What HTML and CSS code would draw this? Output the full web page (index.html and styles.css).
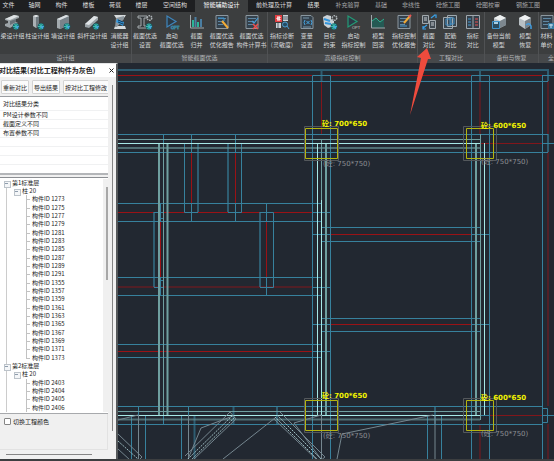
FILE: index.html
```html
<!DOCTYPE html>
<html lang="zh-CN">
<head>
<meta charset="utf-8">
<title>智能辅助设计</title>
<link rel="stylesheet" href="styles.css">
</head>
<body>
<svg class="defs" aria-hidden="true">
  <defs>
    <g id="globe"><circle cx="12" cy="12.500" r="3.300" fill="#17636b"/><path d="M9 12.500h6M12 9.500v6M10 10.500q2 2 4 0M10 14.500q2-2 4 0" stroke="#3fc5b5" stroke-width=".9" fill="none"/><path d="M11.500 13l3-1.500-.5 3.500z" fill="#4aa3e8"/></g>
    <g id="doc"><path d="M2 1.500h12v13H2z" fill="#34414c" stroke="#8c979f"/><path d="M4 4.500h8M4 7.500h6M4 10.500h5" stroke="#5f87a3" fill="none"/></g>
    <g id="play"><path d="M3 2v11l9-5.500z" fill="#2b3a46" stroke="currentColor" stroke-width="1.200"/></g>
  </defs>
</svg>

<nav class="tabs">
  <a href="#">文件</a><a href="#">轴网</a><a href="#">构件</a><a href="#">楼板</a><a href="#">荷载</a><a href="#">楼层</a><a href="#">空间结构</a><a href="#" class="active">智能辅助设计</a><a href="#">前处理及计算</a><a href="#">结果</a><a href="#" class="dim">补充验算</a><a href="#" class="dim">基础</a><a href="#" class="dim">非线性</a><a href="#" class="dim">砼施工图</a><a href="#" class="dim">砼图校审</a><a href="#" class="dim">钢施工图</a>
</nav>

<header class="ribbon">
  <section class="group">
    <div class="tools design">
      <button><svg viewBox="0 0 16 16"><path d="M1 5l9-4 5 1v2l-3 1v3l2 1-8 5-5-2v-2l3-1V7L1 6z" fill="#9da4a8"/><path d="M1 5l9-4 5 1-9 4z" fill="#dfe3e5"/><path d="M6 7l6-2v3l-6 3z" fill="#697278"/><use href="#globe"/></svg><span>梁设计组</span></button>
      <button><svg viewBox="0 0 16 16"><path d="M4 2l3-1 3 1v10l-3 2-3-2z" fill="#aab0b4"/><path d="M7 3l3-1v10l-3 2z" fill="#70797f"/><path d="M4 2l3-1 3 1-3 1z" fill="#e6eaec"/><use href="#globe"/></svg><span>柱设计组</span></button>
      <button><svg viewBox="0 0 16 16"><path d="M2 5l9-4 3 1v9l-9 4-3-1z" fill="#a3aaae"/><path d="M5 6l9-4v9l-9 4z" fill="#79838a"/><path d="M2 5l9-4 3 1-9 4z" fill="#dce1e4"/><use href="#globe"/></svg><span>墙设计组</span></button>
      <button><svg viewBox="0 0 16 16"><path d="M1 10l9-8 4 1v3l-9 8-4-1z" fill="#9ba3a8"/><path d="M1 10l9-8 4 1-9 8z" fill="#dfe3e6"/><use href="#globe"/></svg><span>斜杆设计组</span></button>
      <button><svg viewBox="0 0 16 16"><path d="M2 1h12l-2 3H4zM3 12h10l1 3H2z" fill="#d6dadc"/><path d="M4 4l8-2v3L5 13H3z" fill="#8b959c"/><path d="M5 5l7 3-1 4-7-4z" fill="#3597da"/><path d="M6 8l5 2M6 6l5 2" stroke="#173b57"/></svg><span>消能器<br>设计组</span></button>
    </div>
    <h2>设计组</h2>
  </section>
  <section class="group">
    <div class="tools section">
      <button><svg viewBox="0 0 16 16"><path d="M1 2h9v2H7v8h3v2H1v-2h3V4H1z" fill="#34393d" stroke="#a5abae"/><circle cx="12.500" cy="4" r="2.300" fill="none" stroke="#aeb4b8" stroke-width="1.500" stroke-dasharray="1.500 .7"/><use href="#globe"/></svg><span>截面优选<br>设置</span></button>
      <button><svg viewBox="0 0 16 16" class="blue"><use href="#play"/><text x="7" y="15">OPT</text></svg><span>启动<br>截面优选</span></button>
      <button><svg viewBox="0 0 16 16"><path d="M1.500 1v13H15" fill="none" stroke="#9fa7ac"/><path d="M4 6v7M9 8v5" stroke="#2bb497" stroke-width="2"/><path d="M6.500 3v10M12 5v8" stroke="#4a7ea2" stroke-width="2"/></svg><span>截面<br>归并</span></button>
      <button><svg viewBox="0 0 16 16"><use href="#doc"/><path d="M4 4h6v3H8l4 5" fill="none" stroke="#3993d0"/><path d="M8 7l6 7" stroke="#f0aa37" stroke-width="2"/></svg><span>截面优选<br>优化报告</span></button>
      <button><svg viewBox="0 0 16 16"><use href="#doc"/><path d="M8 7l2 2 4-5" fill="none" stroke="#459cd5" stroke-width="1.200"/><path d="M9 10l5 5M14 10l-5 5" stroke="#ee4f4e" stroke-width="1.500"/></svg><span>截面优选<br>构件计算书</span></button>
    </div>
    <h2>智能截面优选</h2>
  </section>
  <section class="group">
    <div class="tools index">
      <button><svg viewBox="0 0 16 16"><path d="M1 1h7v7H1z" fill="#e13e42"/><path d="M3 3h3v1H3v1h3v1H3" fill="none" stroke="#fff"/><path d="M9 1h5v6H9zM2 9h5v5H2z" fill="#cbd3d8"/><path d="M9 3h5M9 5h5M4 9v5" stroke="#56616a"/><circle cx="11" cy="10.500" r="2.500" fill="#254b62" stroke="#4a9bd0"/><path d="M13 12l2 3" stroke="#4a9bd0"/></svg><span>指标诊断<br>(灵敏度)</span></button>
      <button><svg viewBox="0 0 16 16"><path d="M2 1.500h10l2 2v11H2z" fill="#34414c" stroke="#89969f"/><path d="M4 4h6M4 13h8" stroke="#7696aa"/><path d="M6 6q-2 2.500 0 5M12 6q2 2.500 0 5M7.500 7l3 3M10.500 7l-3 3" fill="none" stroke="#46a5e3"/></svg><span>变量<br>设置</span></button>
      <button><svg viewBox="0 0 16 16"><path d="M1 3l4-2 4 1v3l3 2v5l-6 2-4-3z" fill="#cbd2d6"/><path d="M2 5l6 2M3 9l6 1" stroke="#3295dc" stroke-width="2"/><circle cx="12.500" cy="4" r="2.300" fill="none" stroke="#aeb4b8" stroke-width="1.500" stroke-dasharray="1.500 .7"/><use href="#globe"/></svg><span>目标<br>约束</span></button>
      <button><svg viewBox="0 0 16 16" class="green"><use href="#play"/><text x="7" y="15">OPT</text></svg><span>启动<br>指标控制</span></button>
      <button><svg viewBox="0 0 16 16"><path d="M2 7l4-3 4 4 4-3v9H2z" fill="#245a54"/><path d="M1.500 1v13H15" fill="none" stroke="#9fa7ac"/><path d="M2 7l4-3 4 4 4-3" fill="none" stroke="#2eb08f"/></svg><span>模型<br>回滚</span></button>
      <button><svg viewBox="0 0 16 16"><use href="#doc"/><path d="M4 12h7" stroke="#4a9ed4"/><path d="M8 9l6-7" stroke="#f0aa37" stroke-width="2"/><path d="M13 3l2-2" stroke="#e95655" stroke-width="2"/></svg><span>指标控制<br>优化报告</span></button>
    </div>
    <h2>高级指标控制</h2>
  </section>
  <section class="group">
    <div class="tools compare">
      <button><svg viewBox="0 0 16 16"><path d="M1.500 1.500h6v8h-6zM8.500 6.500h6v8h-6z" fill="#424b52" stroke="#a1a8ad"/><path d="M3 4h3M3 6h3M10 9h3M10 11h3" stroke="#c8ced2"/><path d="M10 4l4-3M13 1h2v3M6 11l-4 3M2 12v3h3" fill="none" stroke="#39a0e8" stroke-width="1.200"/></svg><span>截面<br>对比</span></button>
      <button><svg viewBox="0 0 16 16"><path d="M1.500 3.500h9v11h-9zM5.500 1.500h9v11h-9z" fill="#394650" stroke="#9fa9af"/><path d="M4 5h5v6H4zM8 4h4v6H8z" fill="none" stroke="#408dc4"/></svg><span>配筋<br>对比</span></button>
      <button><svg viewBox="0 0 16 16"><path d="M1.500 1.500h13v13h-13zM8 1v14" fill="#343f49" stroke="#9fa7ad"/><path d="M3 5h3M3 8h3M3 11h3" stroke="#459bd2"/><path d="M10 5h3M10 8h3M10 11h3" stroke="#e64e51"/></svg><span>指标<br>对比</span></button>
    </div>
    <h2>工程对比</h2>
  </section>
  <section class="group">
    <div class="tools backup">
      <button><svg viewBox="0 0 16 16"><path d="M3 4l6-3 6 3v7l-6 3-6-3z" fill="#b7bec3"/><path d="M3 4l6-3 6 3-6 3z" fill="#edf0f1"/><path d="M9 7l6-3v7l-6 3z" fill="#7d878e"/><path d="M1.500 7.500h7v7h-7z" fill="#2a4b60" stroke="#3f94cd"/><path d="M3 8h4v2H3z" fill="#a8cee3"/></svg><span>备份当前<br>模型</span></button>
      <button><svg viewBox="0 0 16 16"><path d="M2 4l6-3 6 3v7l-6 4-6-4z" fill="#b9c0c4"/><path d="M2 4l6-3 6 3-6 3z" fill="#eff1f2"/><path d="M8 7l6-3v7l-6 4z" fill="#798289"/><path d="M9 11q3-3 5 1v3" fill="none" stroke="#429de0" stroke-width="1.500"/></svg><span>模型<br>恢复</span></button>
    </div>
    <h2>备份与恢复</h2>
  </section>
  <section class="group">
    <div class="tools">
      <button><svg viewBox="0 0 16 16"><use href="#doc"/><path d="M9 9h6v6H9z" fill="#397ba2"/><path d="M10 11h4M12 10v4" stroke="#c9e0ee"/></svg><span>材料<br>单价</span></button>
    </div>
    <h2>全</h2>
  </section>
</header>

<svg class="arrow" viewBox="0 0 26 70" aria-hidden="true"><path d="M19 1L23 12H20L2 68 13 11 9 10z" fill="#ef4b3d"/></svg>

<main>
  <aside class="panel">
    <div class="title"><h1>对比结果(对比工程构件为灰色)</h1><button aria-label="关闭"><svg viewBox="0 0 5 5"><path d="M.5.500l4 4M4.500.500l-4 4" stroke="#222"/></svg></button></div>
    <div class="body">
      <div class="content">
        <div class="actions"><button>重新对比</button><button>导出结果</button><button>按对比工程修改</button></div>
        <table>
          <thead><tr><th>对比结果分类</th></tr></thead>
          <tbody>
            <tr><td>PM设计参数不同</td></tr><tr><td>截面定义不同</td></tr><tr><td>布置参数不同</td></tr>
            <tr><td></td></tr><tr><td></td></tr><tr><td></td></tr><tr><td></td></tr>
          </tbody>
        </table>
        <div class="treebox">
          <ul class="tree">
            <li class="floor">第1标准层</li>
            <li class="kind">柱 20</li>
            <li>构件ID 1273</li><li>构件ID 1275</li><li>构件ID 1277</li><li>构件ID 1279</li><li>构件ID 1281</li>
            <li>构件ID 1283</li><li>构件ID 1285</li><li>构件ID 1287</li><li>构件ID 1289</li><li>构件ID 1291</li>
            <li>构件ID 1355</li><li>构件ID 1357</li><li>构件ID 1359</li><li>构件ID 1361</li><li>构件ID 1363</li>
            <li>构件ID 1365</li><li>构件ID 1367</li><li>构件ID 1369</li><li>构件ID 1371</li><li class="last">构件ID 1373</li>
            <li class="floor">第2标准层</li>
            <li class="kind">柱 20</li>
            <li>构件ID 2403</li><li>构件ID 2404</li><li>构件ID 2405</li><li>构件ID 2406</li>
          </ul>
          <div class="track"><i></i></div>
        </div>
        <label class="toggle"><input type="checkbox">切换工程颜色</label>
      </div>
      <div class="vbar"></div>
    </div>
    <div class="hbar"></div>
  </aside>

  <svg class="plan" viewBox="118 63 436 396" preserveAspectRatio="xMinYMin slice" role="img" aria-label="结构平面图">
    <g class="red">
      <path d="M118 75.500H312M331 75.500H471M490 75.500H542M118 212.500H312M118 351.500H312M331 234.500H471M331 324.500H471"/>
      <path d="M191.500 152V203M235.500 152V203M266.500 221V277M160.500 221V277"/>
      <path class="soft" d="M118 287H312M321.500 81V134M480 81V134M480 143.500H554M490 415.500H543M480 425V460M548 81V134M548 152V406M548 424V460"/>
    </g>
    <g class="blue">
      <path d="M118 81.500H548M118 134.500H548M118 152.500H548M118 203.500H321M118 221.500H321M118 277.500H321M118 295.500H321M118 344.500H321M118 357.500H321M118 406.500H543M118 424.500H543"/>
      <path d="M321 227.500H480M321 241.500H480M321 318.500H480M321 331.500H480"/>
      <path d="M312 234.500H331M471 234.500H490M312 324.500H331M471 324.500H490M312 212.500H331M312 287.500H331M312 351.500H331M542 75.500H554M542 143.500H554M543 415.500H554M471 415.500H490"/>
      <path d="M312.500 460V75.500H330.500V460M471.500 460V75.500H489.500V460M542.500 75V460M543 408.500H547.500V422.500H543"/>
      <path d="M163.500 134V424M184.500 143V212.500H198M191.500 134V152M191.500 203V221M235.500 134V152M235.500 203V221M228 212.500H241.500V143"/>
      <path d="M266.500 203V221M266.500 277V295M260 212.500H273.500V287.500H260M154 212.500H163M154 287.500H163M160.500 203V221M160.500 277V295M160 218.500H164M160 280.500H164"/>
      <path d="M131.500 415V460M145.500 415V460M181.500 415V460M427.500 415V460M441.500 415V460M138.500 406V415M188.500 406V415"/>
      <path class="wide" d="M118 70H548V81M321.500 70V81M480 70V81M548 134V152M198 143V212M228 143V212M260 212V287M154 212V287M194.500 415V460M233.500 406V424M277 406V424M435 406V424"/>
    </g>
    <g class="teal">
      <path d="M118 139.500H480M118 411.500H480M163.500 143V415M321.500 139V420M480.500 134V420"/>
      <path class="wide" d="M118 148H480M118 419.500H480"/>
      <path class="thick" d="M159 143V415M167.500 143V415M326 143V415M476 143V415"/>
    </g>
    <path class="cyan" d="M118 143.500H480M118 415.500H480M317.500 143V415M321.500 200V415M484.500 143V415"/>
    <g class="brace">
      <path d="M138.500 415V460M188.500 415V460M321.500 415V460M435 415V460M118 420L138 415M188 459L201 428 233 416M223 459L275 418M321 459L294 423 321 415M337 459L342 434 433 415"/>
      <path d="M118 434L142 457 138 461M118 449L130 460M185 456L230 412 236 419 193 460M280 412L325 457 320 461M274 419L317 460"/>
      <path class="bright" d="M118 441L138 459M188 459L233 415M277 415L321 459M190 461L235 417M275 417L319 461"/>
    </g>
    <g class="outline">
      <path d="M304.500 126.500H338.500V160.500H304.500zM463.500 126.500H496.500V160.500H463.500zM304.500 398.500H338.500V432.500H304.500zM463.500 398.500H496.500V432.500H463.500z"/>
    </g>
    <g class="column">
      <path d="M305.500 128.500H337.500V158.500H305.500zM466.500 128.500H493.500V158.500H466.500zM305.500 400.500H337.500V430.500H305.500zM466.500 400.500H493.500V430.500H466.500z"/>
    </g>
    <g class="size">
      <text x="322" y="126">砼: 700*650</text><text x="481" y="128">砼: 600*650</text><text x="322" y="398">砼: 700*650</text><text x="481" y="400">砼: 600*650</text>
    </g>
    <g class="oldsize">
      <text x="323" y="166">(砼: 750*750)</text><text x="481" y="164">(砼: 750*750)</text><text x="323" y="438">(砼: 750*750)</text><text x="481" y="436">(砼: 750*750)</text>
    </g>
  </svg>
</main>
<footer></footer>
</body>
</html>
```
FILE: styles.css
```css
* { box-sizing: border-box; margin: 0; padding: 0; }

body {
  display: flex;
  flex-direction: column;
  height: 100vh;
  overflow: hidden;
  background: #3c3e3f;
  color: #d6d8da;
  font: 6px/9px "Noto Sans CJK SC", sans-serif;
}

button { border: 0; background: none; color: inherit; font: inherit; }
.defs { position: absolute; width: 0; height: 0; }

.tabs {
  display: grid;
  grid-template-columns: 21fr 27fr 27fr 27fr 26fr 27fr 40fr 53fr 52fr 27fr 41fr 26fr 34fr 40fr 40fr 40fr 6fr;
  flex: none;
  height: 12px;
  background: #1e1f21;
}
.tabs a { color: #dedede; text-align: center; text-decoration: none; white-space: nowrap; }
.tabs a:first-child { padding-right: 4px; }
.tabs .active { background: #3c3e3f; color: #fff; }
.tabs .dim { color: #a5a6a8; }

.ribbon {
  display: grid;
  grid-template-columns: 132fr 136fr 150fr 67fr 54fr 15fr;
  flex: none;
  overflow: hidden;
}
.group { min-width: 0; border-right: 1px solid #505254; }
.group:last-child { border: 0; overflow: hidden; }
.group h2 {
  height: 9px;
  background: #46484a;
  color: #b3b5b7;
  font-size: 6px;
  font-weight: 400;
  line-height: 8px;
  text-align: center;
  white-space: nowrap;
}
.group:last-child h2 { text-align: right; }
.tools { display: grid; height: 42px; padding-top: 2px; }
.design { grid-template-columns: 25fr 25fr 27fr 32fr 23fr; }
.section { grid-template-columns: 26fr 28fr 22fr 29fr 31fr; }
.index { grid-template-columns: 28fr 22fr 24fr 24fr 26fr 26fr; }
.compare { grid-template-columns: 22fr 22fr 23fr; }
.backup { grid-template-columns: 28fr 26fr; }
.tools button {
  display: flex;
  flex-direction: column;
  align-items: center;
  min-width: 0;
  white-space: nowrap;
}
.tools svg { flex: none; width: 16px; height: 16px; margin-bottom: 1px; }
.tools text { fill: #c9cdd0; font: 4px "Liberation Sans", sans-serif; }
.tools .blue { color: #3f86bd; }
.tools .green { color: #239b76; }

.arrow { position: absolute; top: 47px; left: 408px; width: 26px; height: 70px; z-index: 2; }

main { display: flex; flex: 1; min-height: 0; }
footer { flex: none; height: 2px; background: #3c3e40; }

.panel {
  display: flex;
  flex-direction: column;
  flex: none;
  width: 118px;
  padding-bottom: 3px;
  border-top: 1px solid #e4e5e6;
  border-right: 2px solid #55585a;
  background: #f0f0f0;
  color: #1c1c1c;
}
.title { display: flex; flex: none; height: 13px; background: #fff; align-items: center; }
.title h1 { flex: 1; min-width: 0; margin-left: -1px; font-size: 7px; font-weight: 700; white-space: nowrap; }
.title button { width: 9px; }
.title svg { display: block; width: 5px; height: 5px; margin: 0 2px; }

.body { display: flex; flex: 1; min-height: 0; }
.content {
  display: flex;
  flex-direction: column;
  width: 108px;
  overflow: hidden;
}
.actions { display: flex; flex: none; gap: 3px; padding: 3px 0 2px 1px; }
.actions button {
  flex: none;
  height: 14px;
  padding: 0 1px;
  border: 1px solid #d3d3d3;
  border-radius: 1px;
  background: #fbfbfb;
}

table {
  flex: none;
  width: 100%;
  border-top: 1px solid #9a9da1;
  border-bottom: 2px solid #b4b6b9;
  border-collapse: collapse;
  background: #fff;
}
th, td { height: 9px; padding: 0 3px; font-weight: 400; line-height: 8px; text-align: left; border-bottom: 1px solid #f0f1f2; }
th { height: 14px; }

.treebox { display: flex; flex: 1; min-height: 0; margin-top: 2px; padding: 1px 0; border-top: 1px solid #8c8f93; border-bottom: 1px solid #a7a9ac; background: #fff; }
.tree { display: grid; flex: 1; grid-auto-rows: 1fr; list-style: none; background: linear-gradient(#ccc, #ccc) 6px 4px / 1px 100% no-repeat; }
.tree li { position: relative; display: flex; align-items: center; min-height: 0; padding-left: 32px; line-height: 8px; white-space: nowrap; }
.tree li::before { content: ""; position: absolute; left: 26px; top: 0; bottom: 0; border-left: 1px solid #c2c2c2; }
.tree li::after { content: ""; position: absolute; left: 26px; top: 50%; width: 4px; border-top: 1px solid #c2c2c2; }
.tree .last::before { bottom: 50%; }
.tree .floor { padding-left: 12px; }
.tree .kind { padding-left: 22px; }
.tree .floor::before, .tree .kind::before { left: 4px; top: 2px; bottom: auto; width: 5px; height: 5px; border: 1px solid #bcc3ca; background: #f4f6f8; }
.tree .kind::before { left: 14px; }
.tree .floor::after, .tree .kind::after { left: 5px; top: 4px; width: 3px; border-color: #8f9dad; }
.tree .kind::after { left: 15px; }
.track { width: 5px; background: #f0f0f0; }
.track i { display: block; width: 2px; height: 40%; margin: 8px 0 0 3px; background: #a8a8a8; }

.toggle { display: flex; flex: none; align-items: flex-start; gap: 2px; height: 36px; padding: 3px 4px; border-right: 1px solid #e2e2e2; border-bottom: 1px solid #e2e2e2; }
.toggle input { appearance: none; width: 7px; height: 7px; margin-top: 1px; border: 1px solid #858585; border-radius: 1px; background: #fff; }

.vbar { width: 1px; margin: 8px 0 19px 4px; background: #858585; }
.hbar { flex: none; width: 86px; height: 1px; margin: 4px 0 1px 6px; background: #858585; }

.plan { display: block; flex: 1; min-width: 0; height: 100%; background: #222831; }
.plan path { fill: none; stroke-width: 1; }
.plan .wide { stroke-width: 2; opacity: .6; }
.plan .thick { stroke-width: 2; }
.red { stroke: #9a1216; }
.red .soft { opacity: .8; }
.blue { stroke: #37819d; }
.teal { stroke: #6f9fa0; }
.cyan { stroke: #a6e8e6; }
.brace { stroke: #75868f; }
.brace .bright { stroke: #9dbcc0; stroke-dasharray: 2 1; }
.outline { stroke: #54585c; }
.column { stroke: #b4b410; }
.size, .oldsize { font: 7px "DejaVu Sans", "Noto Sans CJK SC", sans-serif; }
.size { fill: #f4f400; font-weight: 700; }
.oldsize { fill: #8b8e91; }
```
